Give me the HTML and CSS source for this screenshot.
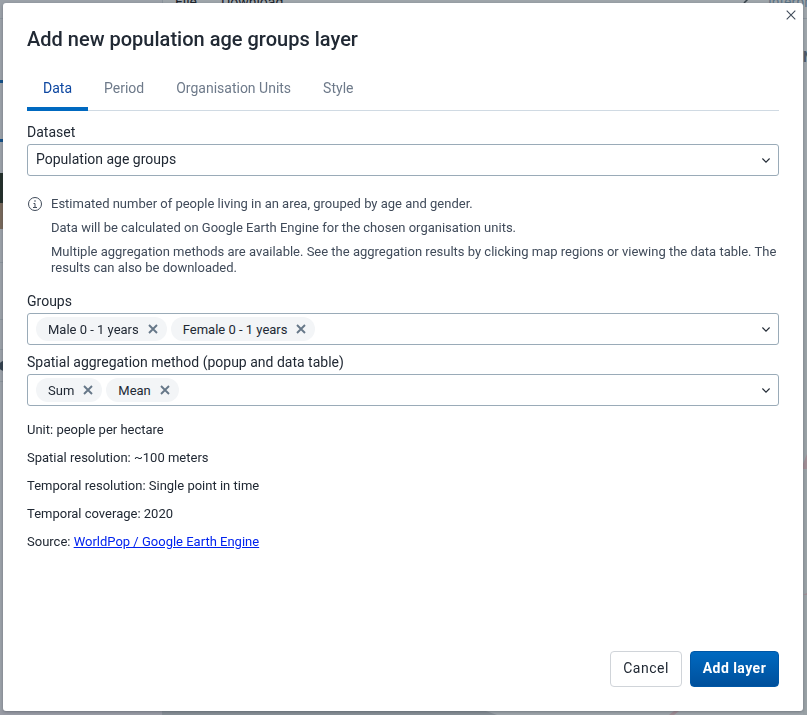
FILE: index.html
```
<!DOCTYPE html>
<html lang="en">
<head>
<meta charset="utf-8">
<title>Add new population age groups layer</title>
<link rel="stylesheet" href="styles.css">
</head>
<body>
<div class="backdrop" aria-hidden="true">
  <svg class="scene" width="807" height="715" viewBox="0 0 807 715">
    <rect width="807" height="715" fill="#9ea5aa"/>
    <rect width="162" height="715" fill="#9ba1a8"/>
    <path d="M162.5 0v18M0 18.5h3M803 18.5h4M0 228.5h3M0 262.5h3M0 319.5h3M0 349.5h3M0 381.5h3" stroke="#8b949c"/>
    <rect y="80" width="3" height="3" fill="#155188"/>
    <rect y="139" width="3" height="3" fill="#155188"/>
    <rect y="173" width="3" height="30" fill="#24302b"/>
    <rect y="203" width="3" height="26" fill="#78695c"/>
    <circle cx="4" cy="366" r="5" fill="#34424f"/>
    <rect y="710" width="162" height="5" fill="#999ca5"/>
    <path d="M162 710h321l14 5H162z" fill="#878f96"/>
    <path d="M803 190h4v525h-4z" fill="#99a1a5"/>
    <path d="M803 464l4-10v15h-4zM669 715l5-4h5l-5 4zM803 595l4-2v2z" fill="#9f8d94"/>
    <path d="M744 3l5-5" stroke="#39444c" stroke-width="1.5"/>
  </svg>
  <span class="menu file">File</span>
  <span class="menu download">Download</span>
  <span class="menu interp">Interpretations</span>
  <span class="menu side">N</span>
</div>

<main class="modal" role="dialog" aria-labelledby="title">
  <button class="close" aria-label="Close">
    <svg width="10" height="10" viewBox="0 0 10 10"><path d="M.7.7l8.6 8.6M9.3.7L.7 9.3" fill="none" stroke="#404b5a" stroke-width="1.1"/></svg>
  </button>
  <h1 id="title">Add new population age groups layer</h1>
  <nav class="tabs">
    <button class="tab selected">Data</button>
    <button class="tab">Period</button>
    <button class="tab">Organisation Units</button>
    <button class="tab">Style</button>
  </nav>

  <section class="content">
    <div class="field">
      <div class="label">Dataset</div>
      <div class="select">
        <span class="value">Population age groups</span>
        <svg class="chevron" width="8" height="5" viewBox="0 0 8 5"><path d="M.4.5L4 4.1 7.6.5"/></svg>
      </div>
    </div>

    <div class="help">
      <svg class="info" width="16" height="16" viewBox="0 0 16 16"><circle cx="8" cy="8" r="6.5"/><path d="M6.5 7.5H8V11M6 11.5h4"/><circle class="dot" cx="8" cy="5" r=".8"/></svg>
      <div class="help-text">
        <p>Estimated number of people living in an area, grouped by age and gender.</p>
        <p>Data will be calculated on Google Earth Engine for the chosen organisation units.</p>
        <p>Multiple aggregation methods are available. See the aggregation results by clicking map regions or viewing the data table. The results can also be downloaded.</p>
      </div>
    </div>

    <div class="field groups">
      <div class="label">Groups</div>
      <div class="select">
        <span class="chip">Male 0 - 1 years<svg width="10" height="10" viewBox="0 0 10 10"><path d="M1 1l8 8M9 1L1 9"/></svg></span>
        <span class="chip">Female 0 - 1 years<svg width="10" height="10" viewBox="0 0 10 10"><path d="M1 1l8 8M9 1L1 9"/></svg></span>
        <svg class="chevron" width="8" height="5" viewBox="0 0 8 5"><path d="M.4.5L4 4.1 7.6.5"/></svg>
      </div>
    </div>

    <div class="field aggregation">
      <div class="label">Spatial aggregation method (popup and data table)</div>
      <div class="select">
        <span class="chip">Sum<svg width="10" height="10" viewBox="0 0 10 10"><path d="M1 1l8 8M9 1L1 9"/></svg></span>
        <span class="chip">Mean<svg width="10" height="10" viewBox="0 0 10 10"><path d="M1 1l8 8M9 1L1 9"/></svg></span>
        <svg class="chevron" width="8" height="5" viewBox="0 0 8 5"><path d="M.4.5L4 4.1 7.6.5"/></svg>
      </div>
    </div>

    <div class="facts">
      <p>Unit: people per hectare</p>
      <p>Spatial resolution: ~100 meters</p>
      <p>Temporal resolution: Single point in time</p>
      <p>Temporal coverage: 2020</p>
      <p>Source: <a href="#">WorldPop / Google Earth Engine</a></p>
    </div>
  </section>

  <footer class="actions">
    <button class="btn cancel">Cancel</button>
    <button class="btn primary">Add layer</button>
  </footer>
</main>
</body>
</html>
```
FILE: styles.css
```
* { box-sizing: border-box; }

body {
  margin: 0;
  height: 715px;
  padding: 3px 4px 4px 3px;
  overflow: hidden;
  font-family: Roboto, "Liberation Sans", sans-serif;
  color: #212934;
}

h1, p { margin: 0; }
button { font-family: inherit; cursor: pointer; }

.backdrop {
  position: fixed;
  inset: 0;
  overflow: hidden;
}

.scene { display: block; }

.menu {
  position: absolute;
  top: -6px;
  font-size: 14px;
  line-height: 16px;
  color: #1b232b;
}

.file { left: 175px; }
.download { left: 221px; }
.interp { left: 768px; color: #5c7385; }
.side { left: 803px; top: 49px; font-weight: 700; color: #4b5b68; }

.modal {
  position: relative;
  display: flex;
  flex-direction: column;
  width: 800px;
  height: 708px;
  padding: 24px;
  background: #fff;
  border-radius: 3px;
  box-shadow: 0 1px 3px rgba(33, 41, 52, .35);
}

.close {
  position: absolute;
  top: 7px;
  right: 7px;
  padding: 0;
  border: 0;
  background: none;
  line-height: 0;
}

h1 {
  font-size: 20px;
  line-height: 24px;
  font-weight: 500;
  letter-spacing: .01px;
}

.tabs {
  display: flex;
  height: 45px;
  margin-top: 15px;
  box-shadow: inset 0 -1px #d0dae3;
}

.tab {
  padding: 3px 16px 0;
  border: 0;
  border-bottom: 4px solid transparent;
  background: none;
  font-size: 14px;
  line-height: 16px;
  color: #6e7a8a;
}

.tab.selected {
  color: #0d47a1;
  border-color: #0069c0;
}

.content { padding-top: 12px; }

.label {
  font-size: 14px;
  line-height: 19px;
  margin-bottom: 2px;
}

.select {
  display: flex;
  align-items: center;
  gap: 4px;
  height: 32px;
  padding: 0 8px;
  border: 1px solid #9aabb8;
  border-radius: 3px;
}

.value {
  font-size: 14px;
  line-height: 16px;
  padding-bottom: 2px;
}

.chevron { margin-left: auto; }
.chevron path { fill: none; stroke: #212934; stroke-width: 1.1; }

.help {
  display: flex;
  gap: 8px;
  margin-top: 20px;
  font-size: 13px;
  line-height: 16px;
  color: #404b5a;
}

.info { flex: none; fill: none; stroke: #404b5a; }
.info .dot { fill: #404b5a; stroke: none; }

.help-text {
  display: flex;
  flex-direction: column;
  gap: 8px;
}

.groups { margin-top: 16px; }
.aggregation { margin-top: 8px; }

.chip {
  display: flex;
  align-items: center;
  gap: 9px;
  height: 24px;
  padding: 1px 9px 0 12px;
  border-radius: 12px;
  background: #f3f5f7;
  font-size: 13px;
}

.chip svg { margin-bottom: 2px; }
.chip path { fill: none; stroke: #667788; stroke-width: 1.9; }

.facts {
  display: flex;
  flex-direction: column;
  gap: 12px;
  margin-top: 16px;
  font-size: 13px;
  line-height: 16px;
}

.facts a { color: #0022ee; }

.actions {
  display: flex;
  justify-content: flex-end;
  gap: 8px;
  margin-top: auto;
}

.btn {
  height: 36px;
  padding: 0 0 2px;
  border: 1px solid #d0d4d9;
  border-radius: 4px;
  background: #fff;
  font-size: 14px;
  letter-spacing: .5px;
  color: #212934;
}

.btn.cancel { width: 72px; }

.btn.primary {
  width: 89px;
  border-color: #0057a6;
  background: linear-gradient(180deg, #0069c0, #00509c);
  color: #fff;
  font-weight: 700;
  letter-spacing: .45px;
}
```
